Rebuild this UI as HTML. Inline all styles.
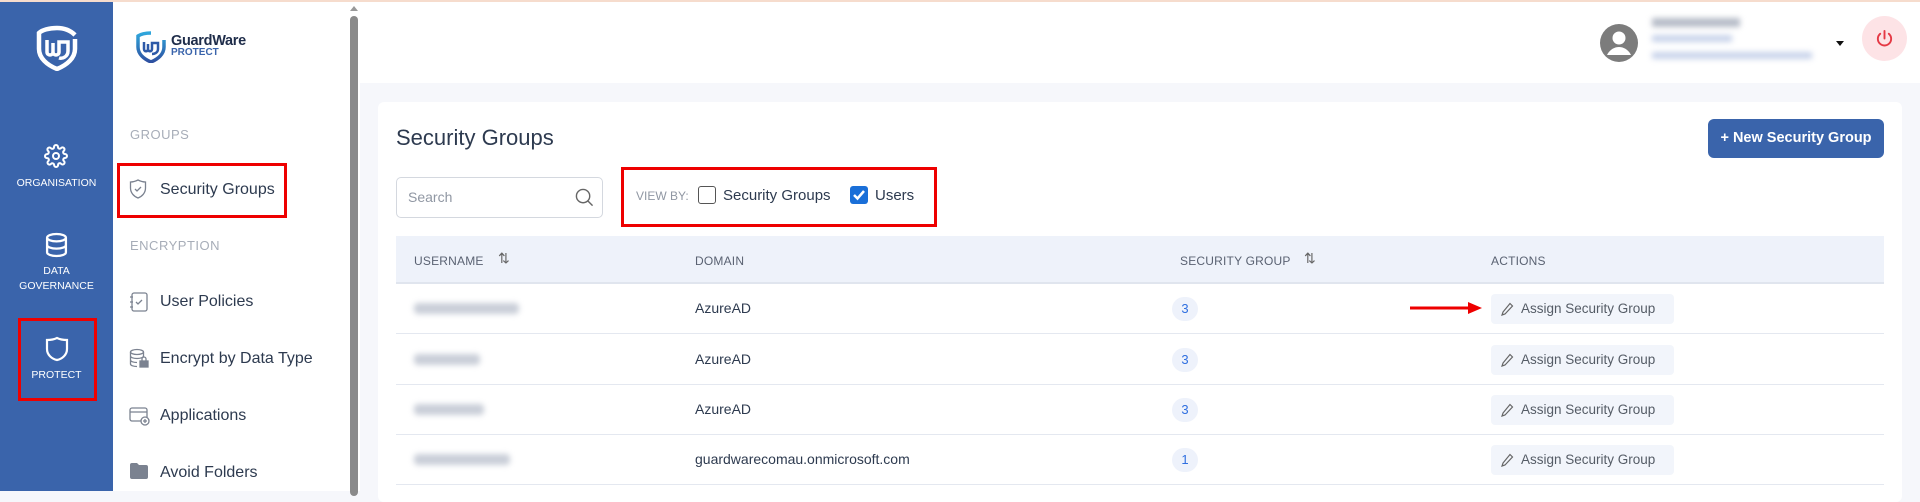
<!DOCTYPE html>
<html><head><meta charset="utf-8">
<style>
*{box-sizing:border-box;margin:0;padding:0}
body{width:1920px;height:491px;overflow:hidden;font-family:"Liberation Sans",sans-serif;background:#f6f7fb;position:relative;color:#2d3a4f}
.abs{position:absolute}
.topline{left:0;top:0;width:1920px;height:2px;background:#f6dccd}
.side{left:0;top:2px;width:113px;height:489px;background:#3a64ab;color:#fff}
.side .lbl{position:absolute;width:113px;text-align:center;font-size:10.5px;line-height:15px}
.panel{left:113px;top:2px;width:247px;height:489px;background:#fff}
.hdr{left:360px;top:2px;width:1560px;height:81px;background:#fff}
.sec{position:absolute;left:130px;font-size:13px;color:#a7adb8;letter-spacing:.5px}
.nav{position:absolute;left:160px;font-size:16px;color:#2d3a4f}
.navi{position:absolute;left:129px}
.card{left:378px;top:102px;width:1524px;height:400px;background:#fff;border-radius:6px}
.row{position:absolute;left:396px;width:1488px;height:50px;border-bottom:1.5px solid #e4e8f0}
.blur{position:absolute;left:18px;top:19px;height:11px;background:#c9ced8;filter:blur(3px);border-radius:4px}
.dom{position:absolute;left:299px;top:16px;font-size:14px;color:#2d3a4f}
.badge{position:absolute;left:776px;top:13px;width:26px;height:24px;border-radius:12px;background:#eef2fb;color:#2f6fe0;font-size:13px;text-align:center;line-height:24px}
.act{position:absolute;left:1095px;top:10px;width:183px;height:30px;border-radius:4px;background:#f2f5fb;color:#555c66;font-size:13.5px;line-height:30px;padding-left:30px}
.act svg{position:absolute;left:10px;top:8px}
.th{position:absolute;top:18px;font-size:12px;color:#5a6272;letter-spacing:.2px}
</style></head><body>
<div class="abs topline"></div>
<div class="abs side">
  <svg class="abs" style="left:35px;top:23px" width="44" height="46" viewBox="0 0 44 46"><path d="M22 3 C14 3 7 5 4 8 L4 24 C4 33 12 40 22 44 C32 40 40 33 40 24 L40 14" fill="none" stroke="#fff" stroke-width="4.5"/><path d="M40 10 C35 5 29 3 22 3" fill="none" stroke="#fff" stroke-width="4.5"/><path d="M12 15 L12 27 C12 31 18 31 18 27 L18 18 L18 27 C18 31 24 31 24 27 L24 17 L33 17 L33 26 C33 32 27 34 24 33" fill="none" stroke="#fff" stroke-width="3.5"/></svg>
  <svg class="abs" style="left:44px;top:142px" width="24" height="24" viewBox="0 0 24 24" fill="none" stroke="#fff" stroke-width="2"><circle cx="12" cy="12" r="3"/><path d="M19.4 15a1.7 1.7 0 0 0 .3 1.8l.1.1a2 2 0 1 1-2.8 2.8l-.1-.1a1.7 1.7 0 0 0-1.8-.3 1.7 1.7 0 0 0-1 1.5V21a2 2 0 1 1-4 0v-.1a1.7 1.7 0 0 0-1.1-1.5 1.7 1.7 0 0 0-1.8.3l-.1.1a2 2 0 1 1-2.8-2.8l.1-.1a1.7 1.7 0 0 0 .3-1.8 1.7 1.7 0 0 0-1.5-1H3a2 2 0 1 1 0-4h.1a1.7 1.7 0 0 0 1.5-1.1 1.7 1.7 0 0 0-.3-1.8l-.1-.1a2 2 0 1 1 2.8-2.8l.1.1a1.7 1.7 0 0 0 1.8.3H9a1.7 1.7 0 0 0 1-1.5V3a2 2 0 1 1 4 0v.1a1.7 1.7 0 0 0 1 1.5 1.7 1.7 0 0 0 1.8-.3l.1-.1a2 2 0 1 1 2.8 2.8l-.1.1a1.7 1.7 0 0 0-.3 1.8V9a1.7 1.7 0 0 0 1.5 1H21a2 2 0 1 1 0 4h-.1a1.7 1.7 0 0 0-1.5 1z"/></svg>
  <div class="lbl" style="top:174px">ORGANISATION</div>
  <svg class="abs" style="left:45px;top:230px" width="23" height="26" viewBox="0 0 22 24" fill="none" stroke="#fff" stroke-width="2.2"><ellipse cx="11" cy="5" rx="9" ry="3.5"/><path d="M2 5v14c0 2 4 3.5 9 3.5s9-1.5 9-3.5V5M2 12c0 2 4 3.5 9 3.5s9-1.5 9-3.5"/></svg>
  <div class="lbl" style="top:262px">DATA<br>GOVERNANCE</div>
  <div class="abs" style="left:18px;top:316px;width:79px;height:83px;border:3px solid #e00"></div>
  <svg class="abs" style="left:45px;top:334px" width="24" height="26" viewBox="0 0 24 26" fill="none" stroke="#fff" stroke-width="2.2"><path d="M12 2C8 4 5 4 2 4v9c0 6 5 10 10 11 5-1 10-5 10-11V4c-3 0-6 0-10-2z"/></svg>
  <div class="lbl" style="top:366px">PROTECT</div>
</div>
<div class="abs panel">
  <svg class="abs" style="left:23px;top:29px" width="30" height="32" viewBox="0 0 30 32"><defs><linearGradient id="g" x1="0" y1="0" x2="0" y2="1"><stop offset="0" stop-color="#2fa6dc"/><stop offset="1" stop-color="#2e4fa0"/></linearGradient></defs><path d="M15 2C10 2 5 3 2 5v11c0 7 6 12 13 15 7-3 13-8 13-15V9" fill="none" stroke="url(#g)" stroke-width="3.5"/><path d="M8 11v7c0 3 4 3 4 0v-5 5c0 3 4 3 4 0v-6h6v6c0 4-4 5-6 5" fill="none" stroke="#2e5aa8" stroke-width="2.5"/></svg>
  <div class="abs" style="left:58px;top:31px;font-size:14.5px;font-weight:bold;color:#1f2d4a;letter-spacing:-.3px">GuardWare</div>
  <div class="abs" style="left:58px;top:45px;font-size:10px;font-weight:bold;color:#3a64ab">PROTECT</div>
  <div class="abs" style="left:237px;top:4px;width:0;height:0;border-left:4px solid transparent;border-right:4px solid transparent;border-bottom:5px solid #999"></div>
  <div class="abs" style="left:237px;top:14px;width:8px;height:480px;background:#8a8a8a;border-radius:4px"></div>
</div>
<div class="sec" style="top:127px">GROUPS</div>
<div class="abs" style="left:117px;top:163px;width:170px;height:55px;border:3px solid #e00"></div>
<svg class="navi" style="top:179px" width="18" height="20" viewBox="0 0 18 20" fill="none" stroke="#7b8290" stroke-width="1.3"><path d="M9 1C6 2.5 4 3 1.5 3v6c0 5 3.5 8.5 7.5 10 4-1.5 7.5-5 7.5-10V3C14 3 12 2.5 9 1z"/><path d="M6 10l2 2 4-4"/></svg>
<div class="nav" style="top:181px">Security Groups</div>
<div class="sec" style="top:238px">ENCRYPTION</div>
<svg class="navi" style="top:292px" width="20" height="20" viewBox="0 0 20 20" fill="none" stroke="#7b8290" stroke-width="1.3"><rect x="3" y="1" width="15" height="18" rx="2"/><path d="M7 10l2 2 4-4M1 5h3M1 10h3M1 15h3"/></svg>
<div class="nav" style="top:293px">User Policies</div>
<svg class="navi" style="top:348px" width="20" height="21" viewBox="0 0 20 21" fill="none" stroke="#7b8290" stroke-width="1.3"><ellipse cx="8" cy="4" rx="6.5" ry="2.5"/><path d="M1.5 4v12c0 1.5 3 2.5 6.5 2.5M1.5 8c0 1.5 3 2.5 6.5 2.5s6.5-1 6.5-2.5V4M1.5 12c0 1.5 3 2.5 6.5 2.5"/><rect x="11" y="13" width="8" height="6" fill="#7b8290"/><path d="M13 13v-2a2 2 0 0 1 4 0v2"/></svg>
<div class="nav" style="top:350px">Encrypt by Data Type</div>
<svg class="navi" style="top:406px" width="21" height="20" viewBox="0 0 21 20" fill="none" stroke="#7b8290" stroke-width="1.3"><rect x="1" y="2" width="17" height="13" rx="2"/><path d="M1 6h17"/><circle cx="16" cy="15" r="4" fill="#fff"/><path d="M16 13v4M14 15h4"/></svg>
<div class="nav" style="top:407px">Applications</div>
<svg class="navi" style="top:462px" width="20" height="18" viewBox="0 0 20 18"><path d="M1 3a2 2 0 0 1 2-2h5l2 2h7a2 2 0 0 1 2 2v10a2 2 0 0 1-2 2H3a2 2 0 0 1-2-2z" fill="#7b8290"/></svg>
<div class="nav" style="top:464px">Avoid Folders</div>

<div class="abs hdr">
  <svg class="abs" style="left:1240px;top:22px" width="38" height="38" viewBox="0 0 38 38"><circle cx="19" cy="19" r="19" fill="#7c7c7c"/><circle cx="19" cy="14" r="6.5" fill="#fff"/><path d="M7 31c3-6 8-8 12-8s9 2 12 8" fill="#fff"/></svg>
  <div class="abs" style="left:1292px;top:16px;width:88px;height:9px;background:#b6bcc8;filter:blur(3px)"></div>
  <div class="abs" style="left:1292px;top:33px;width:80px;height:7px;background:#c8d3ea;filter:blur(3px)"></div>
  <div class="abs" style="left:1292px;top:50px;width:160px;height:7px;background:#c8d3ea;filter:blur(3px)"></div>
  <div class="abs" style="left:1476px;top:39px;width:0;height:0;border-left:4px solid transparent;border-right:4px solid transparent;border-top:5px solid #111"></div>
  <div class="abs" style="left:1502px;top:14px;width:45px;height:45px;border-radius:50%;background:#fde3e6"></div>
  <svg class="abs" style="left:1515px;top:27px" width="19" height="19" viewBox="0 0 20 20" fill="none" stroke="#e53945" stroke-width="2" stroke-linecap="round"><path d="M10 2v8M5.5 5a7 7 0 1 0 9 0"/></svg>
</div>

<div class="abs card"></div>
<div class="abs" style="left:396px;top:125px;font-size:22px;color:#2d3a4f">Security Groups</div>
<div class="abs" style="left:1708px;top:119px;width:176px;height:39px;background:#3a64ab;border-radius:6px;color:#fff;font-size:14.5px;font-weight:bold;text-align:center;line-height:39px">+ New Security Group</div>
<div class="abs" style="left:396px;top:177px;width:207px;height:41px;border:1px solid #d4d8df;border-radius:5px"></div>
<div class="abs" style="left:408px;top:189px;font-size:14px;color:#9097a3">Search</div>
<svg class="abs" style="left:575px;top:188px" width="19" height="19" viewBox="0 0 20 20" fill="none" stroke="#666" stroke-width="1.5"><circle cx="8.5" cy="8.5" r="7"/><path d="M13.5 13.5l5 5"/></svg>
<div class="abs" style="left:621px;top:167px;width:316px;height:60px;border:3px solid #e00"></div>
<div class="abs" style="left:636px;top:189px;font-size:12px;color:#9097a3">VIEW BY:</div>
<div class="abs" style="left:698px;top:186px;width:18px;height:18px;border:1.5px solid #555;border-radius:3px"></div>
<div class="abs" style="left:723px;top:187px;font-size:15px;color:#2d3a4f">Security Groups</div>
<div class="abs" style="left:850px;top:186px;width:18px;height:18px;background:#1a6fd8;border-radius:3px"></div>
<svg class="abs" style="left:852px;top:188px" width="14" height="14" viewBox="0 0 14 14" fill="none" stroke="#fff" stroke-width="2.5"><path d="M2 7l3.5 3.5L12 3"/></svg>
<div class="abs" style="left:875px;top:187px;font-size:15px;color:#2d3a4f">Users</div>

<div class="abs" style="left:396px;top:236px;width:1488px;height:48px;background:#eef2fa;border-bottom:2px solid #e0e5ee">
  <div class="th" style="left:18px">USERNAME</div>
  <div class="th" style="left:102px;top:14px;font-size:14px;color:#666">⇅</div>
  <div class="th" style="left:299px">DOMAIN</div>
  <div class="th" style="left:784px">SECURITY GROUP</div>
  <div class="th" style="left:908px;top:14px;font-size:14px;color:#666">⇅</div>
  <div class="th" style="left:1095px">ACTIONS</div>
</div>
<div class="row" style="top:284px"><div class="blur" style="width:105px"></div><div class="dom">AzureAD</div><div class="badge">3</div><div class="act"><svg width="13" height="14" viewBox="0 0 13 14" fill="none" stroke="#666" stroke-width="1.2"><path d="M9 1.5l2.5 2.5L4 12 1 13l1-3z"/></svg>Assign Security Group</div></div>
<div class="row" style="top:335px"><div class="blur" style="width:66px"></div><div class="dom">AzureAD</div><div class="badge">3</div><div class="act"><svg width="13" height="14" viewBox="0 0 13 14" fill="none" stroke="#666" stroke-width="1.2"><path d="M9 1.5l2.5 2.5L4 12 1 13l1-3z"/></svg>Assign Security Group</div></div>
<div class="row" style="top:385px"><div class="blur" style="width:70px"></div><div class="dom">AzureAD</div><div class="badge">3</div><div class="act"><svg width="13" height="14" viewBox="0 0 13 14" fill="none" stroke="#666" stroke-width="1.2"><path d="M9 1.5l2.5 2.5L4 12 1 13l1-3z"/></svg>Assign Security Group</div></div>
<div class="row" style="top:435px"><div class="blur" style="width:96px"></div><div class="dom">guardwarecomau.onmicrosoft.com</div><div class="badge">1</div><div class="act"><svg width="13" height="14" viewBox="0 0 13 14" fill="none" stroke="#666" stroke-width="1.2"><path d="M9 1.5l2.5 2.5L4 12 1 13l1-3z"/></svg>Assign Security Group</div></div>
<svg class="abs" style="left:1408px;top:301px" width="76" height="14" viewBox="0 0 76 14"><path d="M2 7h62" stroke="#e00" stroke-width="3"/><path d="M60 1l14 6-14 6z" fill="#e00"/></svg>
</body></html>
